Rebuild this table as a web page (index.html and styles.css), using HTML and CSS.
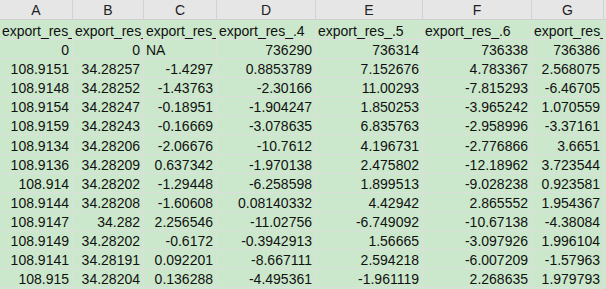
FILE: index.html
```html
<!DOCTYPE html>
<html>
<head>
<meta charset="utf-8">
<link rel="stylesheet" href="styles.css">
</head>
<body>
<div class="sheet">
  <div class="hd">A</div><div class="hd">B</div><div class="hd">C</div><div class="hd">D</div><div class="hd">E</div><div class="hd">F</div><div class="hd">G</div><div class="hd"></div>

  <div class="c">export_res_</div><div class="c">export_res_</div><div class="c">export_res_</div><div class="c">export_res_.4</div><div class="c">export_res_.5</div><div class="c">export_res_.6</div><div class="c">export_res_</div><div class="c"></div>

  <div class="c n">0</div><div class="c n">0</div><div class="c">NA</div><div class="c n">736290</div><div class="c n">736314</div><div class="c n">736338</div><div class="c n">736386</div><div class="c"></div>

  <div class="c n">108.9151</div><div class="c n">34.28257</div><div class="c n">-1.4297</div><div class="c n">0.8853789</div><div class="c n">7.152676</div><div class="c n">4.783367</div><div class="c n">2.568075</div><div class="c"></div>

  <div class="c n">108.9148</div><div class="c n">34.28252</div><div class="c n">-1.43763</div><div class="c n">-2.30166</div><div class="c n">11.00293</div><div class="c n">-7.815293</div><div class="c n">-6.46705</div><div class="c"></div>

  <div class="c n">108.9154</div><div class="c n">34.28247</div><div class="c n">-0.18951</div><div class="c n">-1.904247</div><div class="c n">1.850253</div><div class="c n">-3.965242</div><div class="c n">1.070559</div><div class="c"></div>

  <div class="c n">108.9159</div><div class="c n">34.28243</div><div class="c n">-0.16669</div><div class="c n">-3.078635</div><div class="c n">6.835763</div><div class="c n">-2.958996</div><div class="c n">-3.37161</div><div class="c"></div>

  <div class="c n">108.9134</div><div class="c n">34.28206</div><div class="c n">-2.06676</div><div class="c n">-10.7612</div><div class="c n">4.196731</div><div class="c n">-2.776866</div><div class="c n">3.6651</div><div class="c"></div>

  <div class="c n">108.9136</div><div class="c n">34.28209</div><div class="c n">0.637342</div><div class="c n">-1.970138</div><div class="c n">2.475802</div><div class="c n">-12.18962</div><div class="c n">3.723544</div><div class="c"></div>

  <div class="c n">108.914</div><div class="c n">34.28202</div><div class="c n">-1.29448</div><div class="c n">-6.258598</div><div class="c n">1.899513</div><div class="c n">-9.028238</div><div class="c n">0.923581</div><div class="c"></div>

  <div class="c n">108.9144</div><div class="c n">34.28208</div><div class="c n">-1.60608</div><div class="c n">0.08140332</div><div class="c n">4.42942</div><div class="c n">2.865552</div><div class="c n">1.954367</div><div class="c"></div>

  <div class="c n">108.9147</div><div class="c n">34.282</div><div class="c n">2.256546</div><div class="c n">-11.02756</div><div class="c n">-6.749092</div><div class="c n">-10.67138</div><div class="c n">-4.38084</div><div class="c"></div>

  <div class="c n">108.9149</div><div class="c n">34.28202</div><div class="c n">-0.6172</div><div class="c n">-0.3942913</div><div class="c n">1.56665</div><div class="c n">-3.097926</div><div class="c n">1.996104</div><div class="c"></div>

  <div class="c n">108.9141</div><div class="c n">34.28191</div><div class="c n">0.092201</div><div class="c n">-8.667111</div><div class="c n">2.594218</div><div class="c n">-6.007209</div><div class="c n">-1.57963</div><div class="c"></div>

  <div class="c n">108.915</div><div class="c n">34.28204</div><div class="c n">0.136288</div><div class="c n">-4.495361</div><div class="c n">-1.961119</div><div class="c n">2.268635</div><div class="c n">1.979793</div><div class="c"></div>
</div>
</body>
</html>
```
FILE: styles.css
```css
html, body {
  margin: 0;
  padding: 0;
  background: #cce8cc;
}
body {
  width: 606px;
  height: 289px;
  overflow: hidden;
  font-family: "Liberation Sans", Arial, sans-serif;
  font-size: 14px;
  color: #111;
}
.sheet {
  display: grid;
  grid-template-columns: 73px 71px 73px 99px 107px 109px 72px 20px;
  grid-template-rows: 20px 20px repeat(13, 19.1px);
}
.hd {
  background: #e6e6e6;
  border-right: 1px solid #d2d2d2;
  border-bottom: 1px solid #cfcfcf;
  box-sizing: border-box;
  display: flex;
  align-items: flex-end;
  justify-content: center;
  line-height: 16px;
  padding-bottom: 1px;
  color: #222;
}
.c {
  box-sizing: border-box;
  border-right: 1px solid #dcdfdc;
  border-bottom: 1px solid #dcdfdc;
  padding: 0 3px 0 2px;
  display: flex;
  align-items: flex-end;
  justify-content: flex-start;
  line-height: 16px;
  white-space: nowrap;
  overflow: hidden;
}
.n {
  justify-content: flex-end;
}
```
